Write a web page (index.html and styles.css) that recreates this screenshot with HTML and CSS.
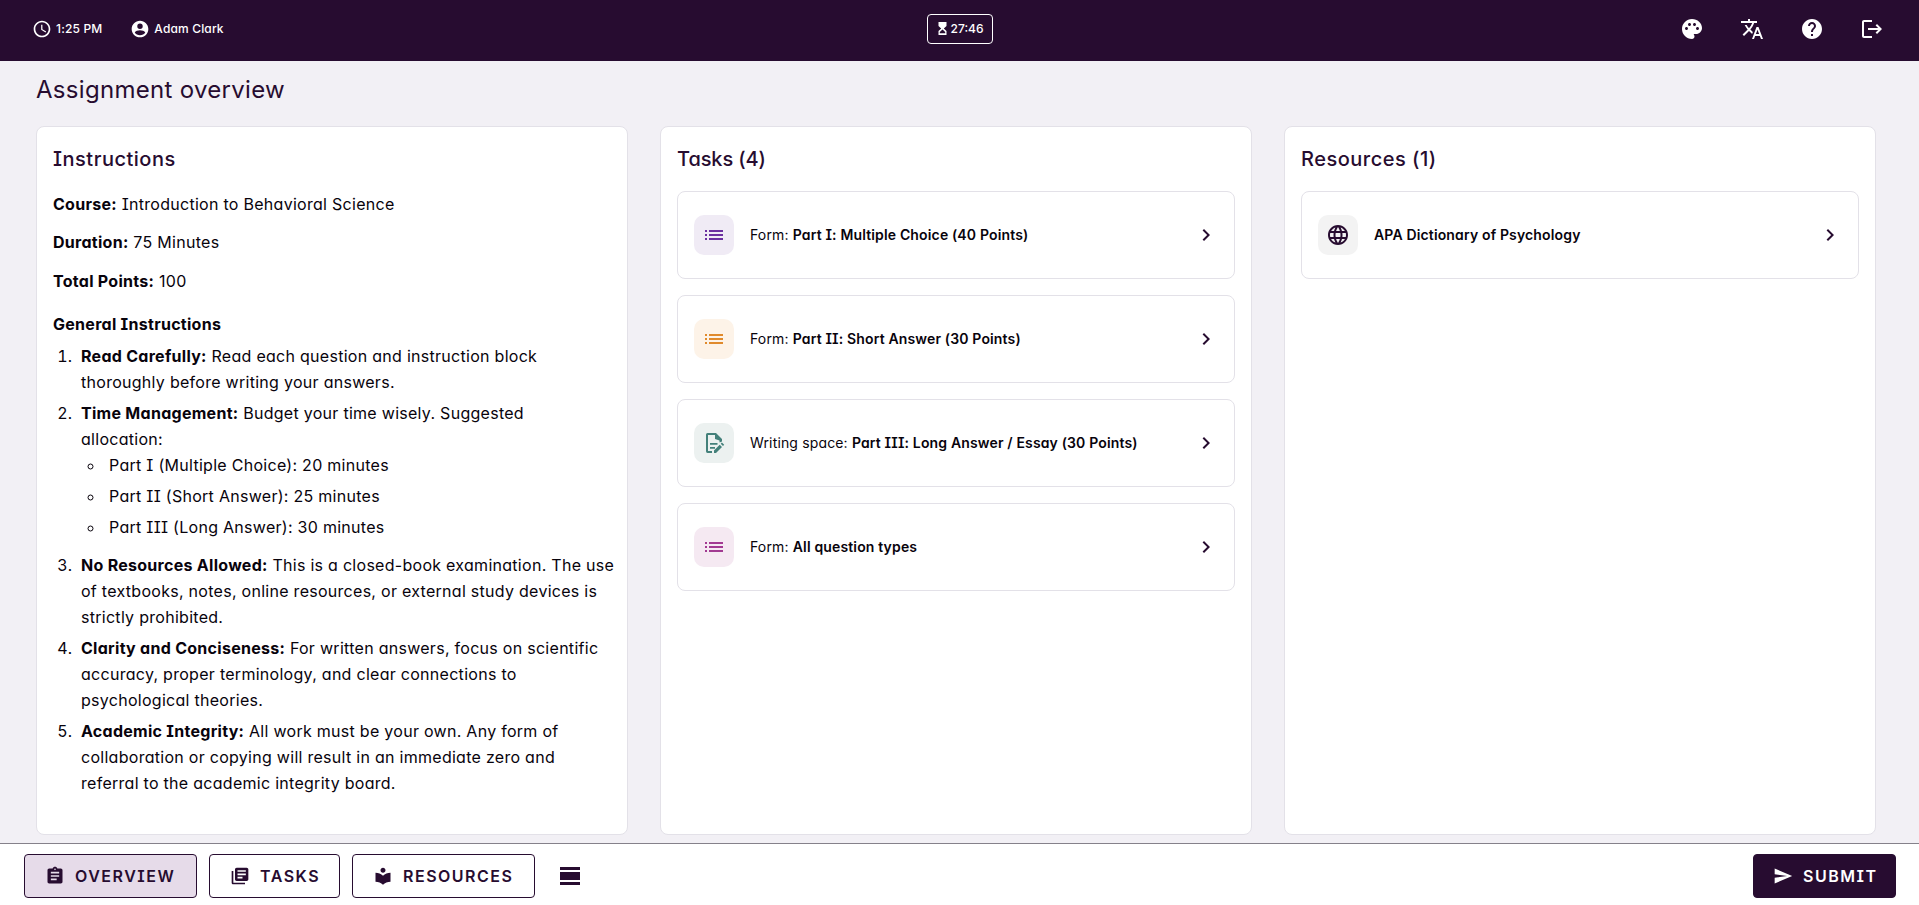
FILE: index.html
```html
<!DOCTYPE html>
<html lang="en">
<head>
    <meta charset="UTF-8">
    <meta name="viewport" content="width=device-width, initial-scale=1.0">
    <title>Assignment overview</title>
    <link rel="stylesheet" href="styles.css">
</head>
<body>
    <!-- Icon shapes shared by the task and resource cards -->
    <svg class="icon-defs" aria-hidden="true">
        <symbol id="icon-list" viewBox="0 0 24 24"><path d="M3 13h2v-2H3v2zm0 4h2v-2H3v2zm0-8h2V7H3v2zm4 4h14v-2H7v2zm0 4h14v-2H7v2zM7 7v2h14V7H7z"/></symbol>
        <symbol id="icon-chevron" viewBox="0 0 24 24"><path d="M10 6 8.59 7.41 13.17 12l-4.58 4.59L10 18l6-6z"/></symbol>
    </svg>

    <header class="top-bar">
        <div class="top-info">
            <span class="info-item time">
                <svg class="icon-info" viewBox="0 0 24 24"><path d="M11.99 2C6.47 2 2 6.48 2 12s4.47 10 9.99 10C17.52 22 22 17.52 22 12S17.52 2 11.99 2zM12 20c-4.42 0-8-3.58-8-8s3.58-8 8-8 8 3.58 8 8-3.58 8-8 8zm.5-13H11v6l5.25 3.15.75-1.23-4.5-2.67z"/></svg>
                <span>1:25 PM</span>
            </span>
            <span class="info-item user">
                <svg class="icon-info" viewBox="0 0 24 24"><path d="M12 2C6.48 2 2 6.48 2 12s4.48 10 10 10 10-4.48 10-10S17.52 2 12 2zm0 3.5a3.25 3.25 0 1 1 0 6.5 3.25 3.25 0 0 1 0-6.5zM12 19.5c-2.7 0-5-1.3-6.3-3.3.8-1.7 3.8-2.6 6.3-2.6s5.5.9 6.3 2.6c-1.3 2-3.6 3.3-6.3 3.3z"/></svg>
                <span>Adam Clark</span>
            </span>
        </div>
        <div class="timer">
            <svg class="icon-timer" viewBox="0 0 9 13"><path d="M.5 0h8v4L5.8 6.5 8.5 9v4h-8V9l2.700-2.500L.5 4zM4.500 7.500 1.800 10v1.300h5.400V10z"/></svg>
            <span>27:46</span>
        </div>
        <nav class="top-actions">
            <svg viewBox="0 0 24 24"><path d="M12 2C6.49 2 2 6.49 2 12s4.49 10 10 10c1.38 0 2.5-1.12 2.5-2.5 0-.61-.23-1.2-.64-1.67-.08-.1-.13-.21-.13-.33 0-.28.22-.5.5-.5H16c3.31 0 6-2.69 6-6 0-4.96-4.49-9-10-9zm5.5 11c-.83 0-1.5-.67-1.5-1.5s.67-1.5 1.5-1.5 1.5.67 1.5 1.5-.67 1.5-1.5 1.5zm-3-4c-.83 0-1.5-.67-1.5-1.5S13.67 6 14.5 6s1.5.67 1.5 1.5S15.33 9 14.5 9zM5 11.5c0-.83.67-1.5 1.5-1.5s1.5.67 1.5 1.5S7.33 13 6.5 13 5 12.33 5 11.5zm6-4c0 .83-.67 1.5-1.5 1.5S8 8.33 8 7.5 8.67 6 9.5 6s1.5.67 1.5 1.5z"/></svg>
            <svg viewBox="0 0 24 24"><path d="m12.87 15.07-2.54-2.51.03-.03c1.74-1.94 2.98-4.17 3.71-6.53H17V4h-7V2H8v2H1v1.99h11.17C11.5 7.92 10.44 9.75 9 11.35 8.07 10.32 7.3 9.19 6.69 8h-2c.73 1.63 1.73 3.17 2.98 4.56l-5.09 5.02L4 19l5-5 3.11 3.11.76-2.04zM18.5 10h-2L12 22h2l1.12-3h4.75L21 22h2l-4.5-12zm-2.62 7 1.62-4.33L19.12 17h-3.24z"/></svg>
            <svg viewBox="0 0 24 24"><path d="M12 2C6.48 2 2 6.48 2 12s4.48 10 10 10 10-4.48 10-10S17.52 2 12 2zm1 17h-2v-2h2v2zm2.07-7.75-.9.92C13.45 12.9 13 13.5 13 15h-2v-.5c0-1.1.45-2.1 1.17-2.83l1.24-1.26c.37-.36.59-.86.59-1.41 0-1.1-.9-2-2-2s-2 .9-2 2H8c0-2.21 1.79-4 4-4s4 1.79 4 4c0 .88-.36 1.68-.93 2.25z"/></svg>
            <svg viewBox="0 0 24 24"><path d="m17 7-1.41 1.41L18.17 11H8v2h10.17l-2.58 2.58L17 17l5-5zM4 5h8V3H4c-1.1 0-2 .9-2 2v14c0 1.1.9 2 2 2h8v-2H4V5z"/></svg>
        </nav>
    </header>

    <main>
        <h1>Assignment overview</h1>
        <div class="columns">
            <section class="panel">
                <h2 class="wide">Instructions</h2>
                <div class="instructions">
                    <p><strong>Course:</strong> Introduction to Behavioral Science</p>
                    <p><strong>Duration:</strong> 75 Minutes</p>
                    <p><strong>Total Points:</strong> 100</p>
                    <h3>General Instructions</h3>
                    <ol>
                        <li><strong>Read Carefully:</strong> Read each question and instruction block<br>thoroughly before writing your answers.</li>
                        <li><strong>Time Management:</strong> Budget your time wisely. Suggested<br>allocation:
                            <ul>
                                <li>Part I (Multiple Choice): 20 minutes</li>
                                <li>Part II (Short Answer): 25 minutes</li>
                                <li>Part III (Long Answer): 30 minutes</li>
                            </ul>
                        </li>
                        <li><strong>No Resources Allowed:</strong> This is a closed-book examination. The use<br>of textbooks, notes, online resources, or external study devices is<br>strictly prohibited.</li>
                        <li><strong>Clarity and Conciseness:</strong> For written answers, focus on scientific<br>accuracy, proper terminology, and clear connections to<br>psychological theories.</li>
                        <li><strong>Academic Integrity:</strong> All work must be your own. Any form of<br>collaboration or copying will result in an immediate zero and<br>referral to the academic integrity board.</li>
                    </ol>
                </div>
            </section>

            <section class="panel">
                <h2>Tasks (4)</h2>
                <div class="card-list">
                    <div class="card">
                        <div class="card-icon purple"><svg><use href="#icon-list"/></svg></div>
                        <div class="card-title">Form: <b>Part I: Multiple Choice (40 Points)</b></div>
                        <svg class="chevron"><use href="#icon-chevron"/></svg>
                    </div>
                    <div class="card">
                        <div class="card-icon orange"><svg><use href="#icon-list"/></svg></div>
                        <div class="card-title">Form: <b>Part II: Short Answer (30 Points)</b></div>
                        <svg class="chevron"><use href="#icon-chevron"/></svg>
                    </div>
                    <div class="card">
                        <div class="card-icon green">
                            <svg viewBox="0 0 24 24"><path d="M5.5 2H14l6 6v2.5l-2.5 1V9.5L13 8V4H6v16h4v2H5.5A1.8 1.8 0 0 1 4 20.2V3.8A1.8 1.8 0 0 1 5.5 2zM8 12h7.5v1.7H8zM8 16h5v1.7H8zM12 22v-2.6l5.7-5.7 2.3 2.3-6 6zM18.7 12.7l1.2-1.2 2.3 2.3-1.2 1.2z"/></svg>
                        </div>
                        <div class="card-title">Writing space: <b>Part III: Long Answer / Essay (30 Points)</b></div>
                        <svg class="chevron"><use href="#icon-chevron"/></svg>
                    </div>
                    <div class="card">
                        <div class="card-icon pink"><svg><use href="#icon-list"/></svg></div>
                        <div class="card-title">Form: <b>All question types</b></div>
                        <svg class="chevron"><use href="#icon-chevron"/></svg>
                    </div>
                </div>
            </section>

            <section class="panel">
                <h2 class="wide">Resources (1)</h2>
                <div class="card-list">
                    <div class="card resource">
                        <div class="card-icon grey">
                            <svg viewBox="0 0 24 24"><path d="M11.99 2C6.47 2 2 6.48 2 12s4.47 10 9.99 10C17.52 22 22 17.52 22 12S17.52 2 11.99 2zm6.93 6h-2.95c-.32-1.25-.78-2.45-1.38-3.56 1.84.63 3.37 1.91 4.33 3.56zM12 4.04c.83 1.2 1.48 2.53 1.91 3.96h-3.82c.43-1.43 1.08-2.76 1.91-3.96zM4.26 14C4.1 13.36 4 12.69 4 12s.1-1.36.26-2h3.38c-.08.66-.14 1.32-.14 2s.06 1.34.14 2H4.26zm.82 2h2.95c.32 1.25.78 2.45 1.38 3.56-1.84-.63-3.37-1.9-4.33-3.56zm2.95-8H5.08c.96-1.66 2.49-2.93 4.33-3.56C8.81 5.55 8.35 6.75 8.03 8zM12 19.96c-.83-1.2-1.48-2.53-1.91-3.96h3.82c-.43 1.43-1.08 2.76-1.91 3.96zM14.34 14H9.66c-.09-.66-.16-1.32-.16-2s.07-1.35.16-2h4.68c.09.65.16 1.32.16 2s-.07 1.34-.16 2zm.25 5.56c.6-1.11 1.06-2.31 1.38-3.56h2.95c-.96 1.65-2.49 2.93-4.33 3.56zM16.36 14c.08-.66.14-1.32.14-2s-.06-1.34-.14-2h3.38c.16.64.26 1.31.26 2s-.1 1.36-.26 2h-3.38z"/></svg>
                        </div>
                        <div class="card-title"><b>APA Dictionary of Psychology</b></div>
                        <svg class="chevron"><use href="#icon-chevron"/></svg>
                    </div>
                </div>
            </section>
        </div>
    </main>

    <footer class="bottom-bar">
        <button class="nav-btn overview active">
            <svg viewBox="0 0 24 24"><path d="M19 3h-4.18C14.4 1.84 13.3 1 12 1c-1.3 0-2.4.84-2.82 2H5c-1.1 0-2 .9-2 2v14c0 1.1.9 2 2 2h14c1.1 0 2-.9 2-2V5c0-1.1-.9-2-2-2zm-7 0c.55 0 1 .45 1 1s-.45 1-1 1-1-.45-1-1 .45-1 1-1zm2 14H7v-2h7v2zm3-4H7v-2h10v2zm0-4H7V7h10v2z"/></svg>
            <span>OVERVIEW</span>
        </button>
        <button class="nav-btn tasks">
            <svg viewBox="0 0 24 24"><path d="M4 6H2v14c0 1.1.9 2 2 2h14v-2H4V6zm16-4H8c-1.1 0-2 .9-2 2v12c0 1.1.9 2 2 2h12c1.1 0 2-.9 2-2V4c0-1.1-.9-2-2-2zm-1 9H9V9h10v2zm-4 4H9v-2h6v2zm4-8H9V5h10v2z"/></svg>
            <span>TASKS</span>
        </button>
        <button class="nav-btn resources">
            <svg viewBox="0 0 24 24"><path d="M12 11.55C9.64 9.35 6.48 8 3 8v11c3.48 0 6.64 1.35 9 3.55 2.36-2.19 5.52-3.55 9-3.55V8c-3.48 0-6.64 1.35-9 3.55zM12 8c1.66 0 3-1.34 3-3s-1.34-3-3-3-3 1.34-3 3 1.34 3 3 3z"/></svg>
            <span>RESOURCES</span>
        </button>
        <svg class="layout-toggle" viewBox="0 0 24 24"><path d="M2 3h20v3H2zM2 8h20v8H2zM2 18h20v3H2z"/></svg>
        <button class="submit-btn">
            <svg viewBox="0 0 24 24"><path d="M2.01 21 23 12 2.01 3 2 10l15 2-15 2z"/></svg>
            <span>SUBMIT</span>
        </button>
    </footer>
</body>
</html>
```
FILE: styles.css
```css
* {
    box-sizing: border-box;
}
body {
    margin: 0;
    height: 100vh;
    display: flex;
    flex-direction: column;
    overflow: hidden;
    background-color: #f2f0f5;
    color: #08030c;
    font-family: Inter, "Open Sans", sans-serif;
    /* single-storey a, capital I with serifs */
    font-feature-settings: "cv11", "cv08";
}
svg {
    fill: currentColor;
    flex-shrink: 0;
}
.icon-defs {
    display: none;
}
.top-bar {
    height: 61px;
    padding: 0 32px 4px;
    display: grid;
    grid-template-columns: 1fr auto 1fr;
    align-items: center;
    background-color: #270c30;
    color: #fff;
    font-size: 12px;
    font-weight: 500;
    letter-spacing: 0.15px;
}
.top-info {
    display: flex;
    gap: 28px;
}
.info-item {
    display: flex;
    align-items: center;
    gap: 4px;
}
.icon-info {
    width: 20px;
    height: 20px;
}
.timer {
    display: flex;
    align-items: center;
    justify-content: center;
    gap: 4px;
    width: 66px;
    height: 30px;
    padding-left: 2px;
    border: 1px solid #fff;
    border-radius: 4px;
    letter-spacing: 0;
}
.icon-timer {
    width: 9px;
    height: 13px;
}
.top-actions {
    display: flex;
    justify-content: flex-end;
    gap: 36px;
    margin-right: 3px;
}
.top-actions svg {
    width: 24px;
    height: 24px;
}
main {
    flex: 1;
    min-height: 0;
    display: flex;
    flex-direction: column;
    padding: 0 43px 8px 36px;
}
h1 {
    margin: 0;
    padding-top: 13px;
    height: 65px;
    font-size: 24px;
    line-height: 32px;
    font-weight: 400;
    letter-spacing: 0.3px;
    color: #270c30;
}
.columns {
    flex: 1;
    min-height: 0;
    display: grid;
    grid-template-columns: repeat(3, 1fr);
    gap: 32px;
}
.panel {
    min-width: 0;
    padding: 16px;
    background-color: #fff;
    border: 1px solid #e3e1e8;
    border-radius: 8px;
}
h2 {
    margin: 0 0 16px;
    font-size: 20px;
    line-height: 32px;
    font-weight: 500;
    letter-spacing: -0.1px;
    color: #270c30;
}
h2.wide {
    letter-spacing: 0.5px;
}
.instructions {
    font-size: 16px;
    line-height: 26.2px;
    letter-spacing: 0.28px;
    white-space: nowrap;
}
.instructions p {
    margin: 0 0 12.2px;
}
.instructions strong {
    font-weight: 700;
}
h3 {
    margin: 17px 0 6px;
    font-size: 16px;
    line-height: 26.2px;
    font-weight: 700;
}
ol,
ul {
    margin: 0;
    padding-left: 24px;
}
li {
    margin-bottom: 4.4px;
    padding-left: 4px;
}
ul {
    padding-bottom: 3px;
}
.card-list {
    display: flex;
    flex-direction: column;
    gap: 16px;
}
.card {
    display: flex;
    align-items: center;
    gap: 16px;
    height: 88px;
    padding: 0 16px;
    border: 1px solid #e3e1e8;
    border-radius: 8px;
}
.card-icon {
    display: flex;
    align-items: center;
    justify-content: center;
    width: 40px;
    height: 40px;
    border-radius: 10px;
}
.card-icon svg {
    width: 24px;
    height: 24px;
}
.purple {
    background-color: #f0ebf5;
    color: #6b2fa0;
}
.orange {
    background-color: #fdf3e8;
    color: #e08a2c;
}
.green {
    background-color: #ecf1f0;
    color: #43807a;
}
.pink {
    background-color: #f5e9f2;
    color: #a23a92;
}
.grey {
    background-color: #f3f3f3;
    color: #270c30;
}
.card-title {
    flex: 1;
    padding-bottom: 1px;
    font-size: 14px;
    letter-spacing: 0.15px;
    white-space: nowrap;
}
.card-title b {
    font-weight: 600;
}
.chevron {
    width: 24px;
    height: 24px;
    color: #270c30;
}
.bottom-bar {
    height: 62px;
    padding: 10px 23px 0 24px;
    display: flex;
    align-items: flex-start;
    gap: 12px;
    background-color: #fff;
    border-top: 1px solid #85818a;
}
button {
    display: flex;
    align-items: center;
    height: 44px;
    padding: 0 20px;
    gap: 10px;
    border: 1px solid #270c30;
    border-radius: 4px;
    background-color: #fff;
    color: #270c30;
    font: inherit;
    font-feature-settings: inherit;
    font-size: 16px;
    font-weight: 600;
    letter-spacing: 1.5px;
    white-space: nowrap;
}
button svg {
    width: 20px;
    height: 20px;
}
.overview {
    width: 173px;
}
.tasks {
    width: 131px;
}
.resources {
    width: 183px;
}
.nav-btn.active {
    background-color: #e6dbe9;
}
.layout-toggle {
    width: 24px;
    height: 24px;
    margin: 10px 0 0 11px;
    color: #270c30;
}
.submit-btn {
    width: 143px;
    margin-left: auto;
    background-color: #270c30;
    color: #fff;
}
.submit-btn svg {
    margin-left: -1px;
}
```
